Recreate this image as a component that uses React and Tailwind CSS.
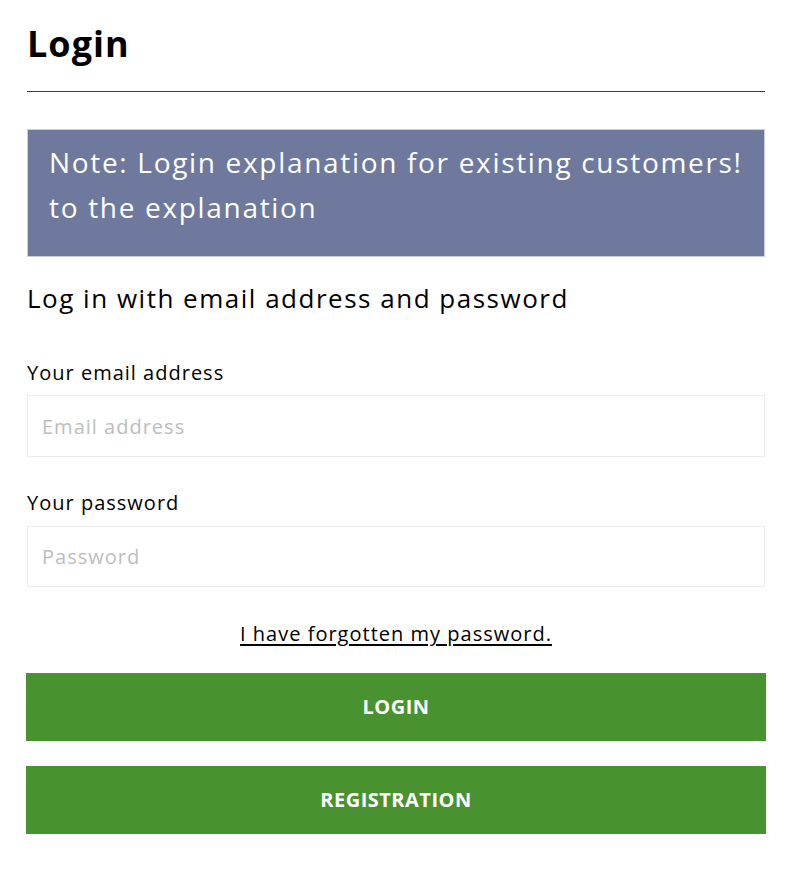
import { useState } from "react";

/* ── LOGIN PAGE ──────────────────────────────────────────────────────── */
export default function App() {
  const [email, setEmail] = useState("");
  const [password, setPassword] = useState("");

  return (
    <div className="min-h-screen bg-white px-[27px] pt-[20px] text-black" style={{ fontFamily: '"Open Sans", "Liberation Sans", sans-serif' }}>
      <h1 className="text-[36px] font-bold leading-[48px] tracking-[1px]">Login</h1>
      <hr className="mt-[23px] border-0 border-t border-[#3a3a3a]" />

      <div className="mt-[37px] border border-[#c8cde0] bg-[#6e799d] px-[21px] pt-[10px] pb-[26px] text-[28px] leading-[45px] tracking-[0.06em] text-white">
        <p>Note: Login explanation for existing customers!</p>
        <p>to the explanation</p>
      </div>

      <h2 className="mt-[23px] text-[26px] leading-[36px] font-normal tracking-[0.058em]">Log in with email address and password</h2>

      <form onSubmit={(e) => e.preventDefault()} className="tracking-[0.063em]">
        <label className="mt-[43px] block text-[20px] leading-[28px]">Your email address</label>
        <input type="email" value={email} onChange={(e) => setEmail(e.target.value)} placeholder="Email address"
          className="mt-[8px] block h-[62px] w-full border border-[#ececec] px-[14px] text-[20px] placeholder-[#bdbdbd] focus:outline-none" />

        <label className="mt-[32px] block text-[20px] leading-[28px]">Your password</label>
        <input type="password" value={password} onChange={(e) => setPassword(e.target.value)} placeholder="Password"
          className="mt-[9px] block h-[61px] w-full border border-[#ececec] px-[14px] text-[20px] placeholder-[#bdbdbd] focus:outline-none" />

        <div className="mt-[33px] text-center text-[20px] leading-[28px]">
          <a href="#" className="underline underline-offset-[3px]">I have forgotten my password.</a>
        </div>

        <button type="submit" className="-mx-px mt-[25px] block h-[68px] w-[calc(100%+2px)] bg-[#48932f] text-[20px] font-bold uppercase tracking-[0.5px] text-white">
          Login
        </button>
        <button type="button" className="-mx-px mt-[25px] block h-[68px] w-[calc(100%+2px)] bg-[#48932f] text-[20px] font-bold uppercase tracking-[0.5px] text-white">
          Registration
        </button>
      </form>
    </div>
  );
}
